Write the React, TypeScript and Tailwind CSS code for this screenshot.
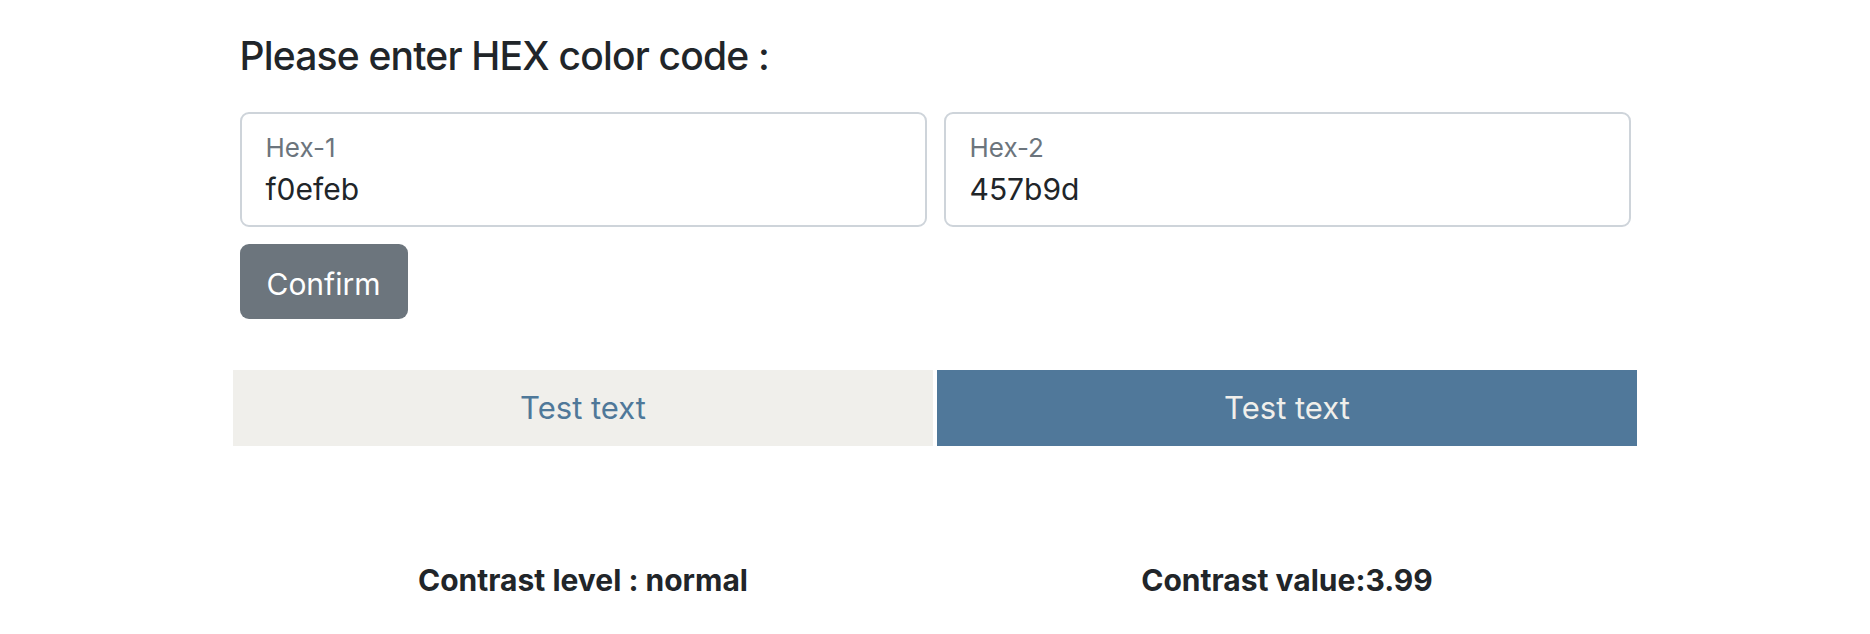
import React from "react";

interface HexFieldProps {
  label: string;
  value: string;
}

const HexField: React.FC<HexFieldProps> = ({ label, value }) => {
  return (
    <div className="w-[688px] h-[115px] border-2 border-[#ced4da] rounded-[9px] bg-white px-[24px] pt-[21px]">
      <div className="text-[26px] leading-[26px] text-[#6c757d]">{label}</div>
      <div className="mt-[13px] text-[30px] leading-[30px] text-[#212529]">{value}</div>
    </div>
  );
};

export default function App() {
  const hex1 = "f0efeb";
  const hex2 = "457b9d";

  return (
    <div className="min-h-[634px] bg-white font-['Inter','Noto_Sans',sans-serif]">
      <div className="w-[1391px] mx-auto pt-[32px]">
        <h5 className="text-[39px] leading-[48px] font-medium tracking-[-0.8px] text-[#212529]">Please enter HEX color code :</h5>

        <div className="mt-[32px] flex gap-[17px]">
          <HexField label="Hex-1" value={hex1} />
          <HexField label="Hex-2" value={hex2} />
        </div>

        <button className="mt-[17px] w-[168px] h-[75px] rounded-[9px] bg-[#6c757d] text-white text-[30px] leading-[30px] flex items-center justify-center pt-[4px]">
          Confirm
        </button>
      </div>

      {/* preview of both colours */}
      <div className="w-[1404px] mx-auto mt-[51px] flex gap-[4px]">
        <div className="w-[700px] h-[76px] bg-[#f0efeb] text-[#4f7899] text-[31px] flex items-center justify-center">
          Test text
        </div>
        <div className="w-[700px] h-[76px] bg-[#50789a] text-[#f0efeb] text-[31px] flex items-center justify-center">
          Test text
        </div>
      </div>

      <div className="w-[1404px] mx-auto mt-[116px] flex gap-[4px] text-[30px] leading-[36px] font-bold text-[#212529]">
        <div className="w-[700px] text-center">Contrast level : normal</div>
        <div className="w-[700px] text-center">Contrast value:3.99</div>
      </div>
    </div>
  );
}
